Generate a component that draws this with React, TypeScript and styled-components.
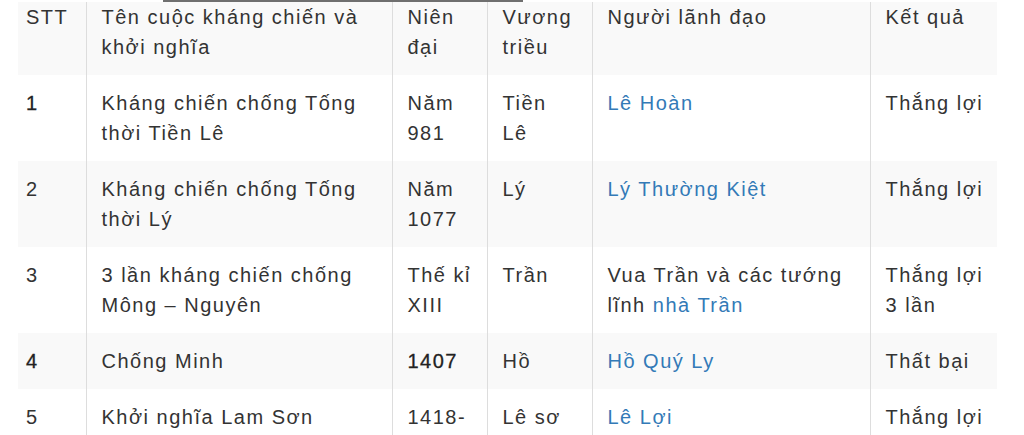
import React from "react";
import styled, { createGlobalStyle } from "styled-components";

const GlobalStyle = createGlobalStyle`
  html, body {
    margin: 0;
    padding: 0;
    background: #ffffff;
  }
  body {
    font-family: "Liberation Sans", Arial, sans-serif;
    color: #333333;
  }
`;

const Page = styled.div`
  display: flex;
  flex-direction: column;
  padding-left: 18px;
  width: 979px;
  overflow: hidden;
`;

const TopRule = styled.div`
  height: 2px;
  width: 360px;
  margin-left: 145px;
  background: #6f6f6f;
`;

const Table = styled.table`
  width: 979px;
  table-layout: fixed;
  border-collapse: collapse;
  border-spacing: 0;
  font-family: "Liberation Sans", Arial, sans-serif;
  font-size: 20px;
  letter-spacing: 1.5px;
  line-height: 30px;
`;

const Row = styled.tr<{ $striped?: boolean }>`
  background: ${(p) => (p.$striped ? "#f9f9f9" : "#ffffff")};
`;

const Cell = styled.td<{ $first?: boolean; $strong?: boolean; $top?: number }>`
  vertical-align: top;
  text-align: left;
  font-weight: 400;
  padding: ${(p) => (p.$top ?? 13)}px 8px 13px ${(p) => (p.$first ? 8 : 15)}px;
  border-left: ${(p) => (p.$first ? "none" : "1px solid #dddddd")};
  color: ${(p) => (p.$strong ? "#222222" : "#333333")};
  -webkit-text-stroke: ${(p) => (p.$strong ? "0.3px #222222" : "0")};

  &:nth-child(4) {
    padding-right: 18px;
  }
`;

const HeadCell = styled(Cell).attrs({ as: "th" })``;

const Link = styled.a`
  color: #337ab7;
  text-decoration: none;
`;

type Item = {
  no: string;
  noStrong?: boolean;
  name: string;
  era: string;
  eraStrong?: boolean;
  dynasty: string;
  leader: React.ReactNode;
  result: string;
};

const rows: Item[] = [
  {
    no: "1",
    noStrong: true,
    name: "Kháng chiến chống Tống thời Tiền Lê",
    era: "Năm 981",
    dynasty: "Tiền Lê",
    leader: <Link href="#">Lê Hoàn</Link>,
    result: "Thắng lợi",
  },
  {
    no: "2",
    name: "Kháng chiến chống Tống thời Lý",
    era: "Năm 1077",
    dynasty: "Lý",
    leader: <Link href="#">Lý Thường Kiệt</Link>,
    result: "Thắng lợi",
  },
  {
    no: "3",
    name: "3 lần kháng chiến chống Mông – Nguyên",
    era: "Thế kỉ XIII",
    dynasty: "Trần",
    leader: (
      <>
        Vua Trần và các tướng lĩnh <Link href="#">nhà Trần</Link>
      </>
    ),
    result: "Thắng lợi 3 lần",
  },
  {
    no: "4",
    noStrong: true,
    name: "Chống Minh",
    era: "1407",
    eraStrong: true,
    dynasty: "Hồ",
    leader: <Link href="#">Hồ Quý Ly</Link>,
    result: "Thất bại",
  },
  {
    no: "5",
    name: "Khởi nghĩa Lam Sơn",
    era: "1418-",
    dynasty: "Lê sơ",
    leader: <Link href="#">Lê Lợi</Link>,
    result: "Thắng lợi",
  },
];

export default function App() {
  return (
    <>
      <GlobalStyle />
      <Page>
        <TopRule />
        <Table>
          <colgroup>
            <col style={{ width: 68 }} />
            <col style={{ width: 306 }} />
            <col style={{ width: 95 }} />
            <col style={{ width: 105 }} />
            <col style={{ width: 278 }} />
            <col style={{ width: 127 }} />
          </colgroup>
          <thead>
            <Row $striped>
              <HeadCell $first $top={0}>STT</HeadCell>
              <HeadCell $top={0}>Tên cuộc kháng chiến và khởi nghĩa</HeadCell>
              <HeadCell $top={0}>Niên đại</HeadCell>
              <HeadCell $top={0}>Vương triều</HeadCell>
              <HeadCell $top={0}>Người lãnh đạo</HeadCell>
              <HeadCell $top={0}>Kết quả</HeadCell>
            </Row>
          </thead>
          <tbody>
            {rows.map((r, i) => (
              <Row key={r.no} $striped={i % 2 === 1}>
                <Cell $first $strong={r.noStrong}>{r.no}</Cell>
                <Cell>{r.name}</Cell>
                <Cell $strong={r.eraStrong}>{r.era}</Cell>
                <Cell>{r.dynasty}</Cell>
                <Cell>{r.leader}</Cell>
                <Cell>{r.result}</Cell>
              </Row>
            ))}
          </tbody>
        </Table>
      </Page>
    </>
  );
}
